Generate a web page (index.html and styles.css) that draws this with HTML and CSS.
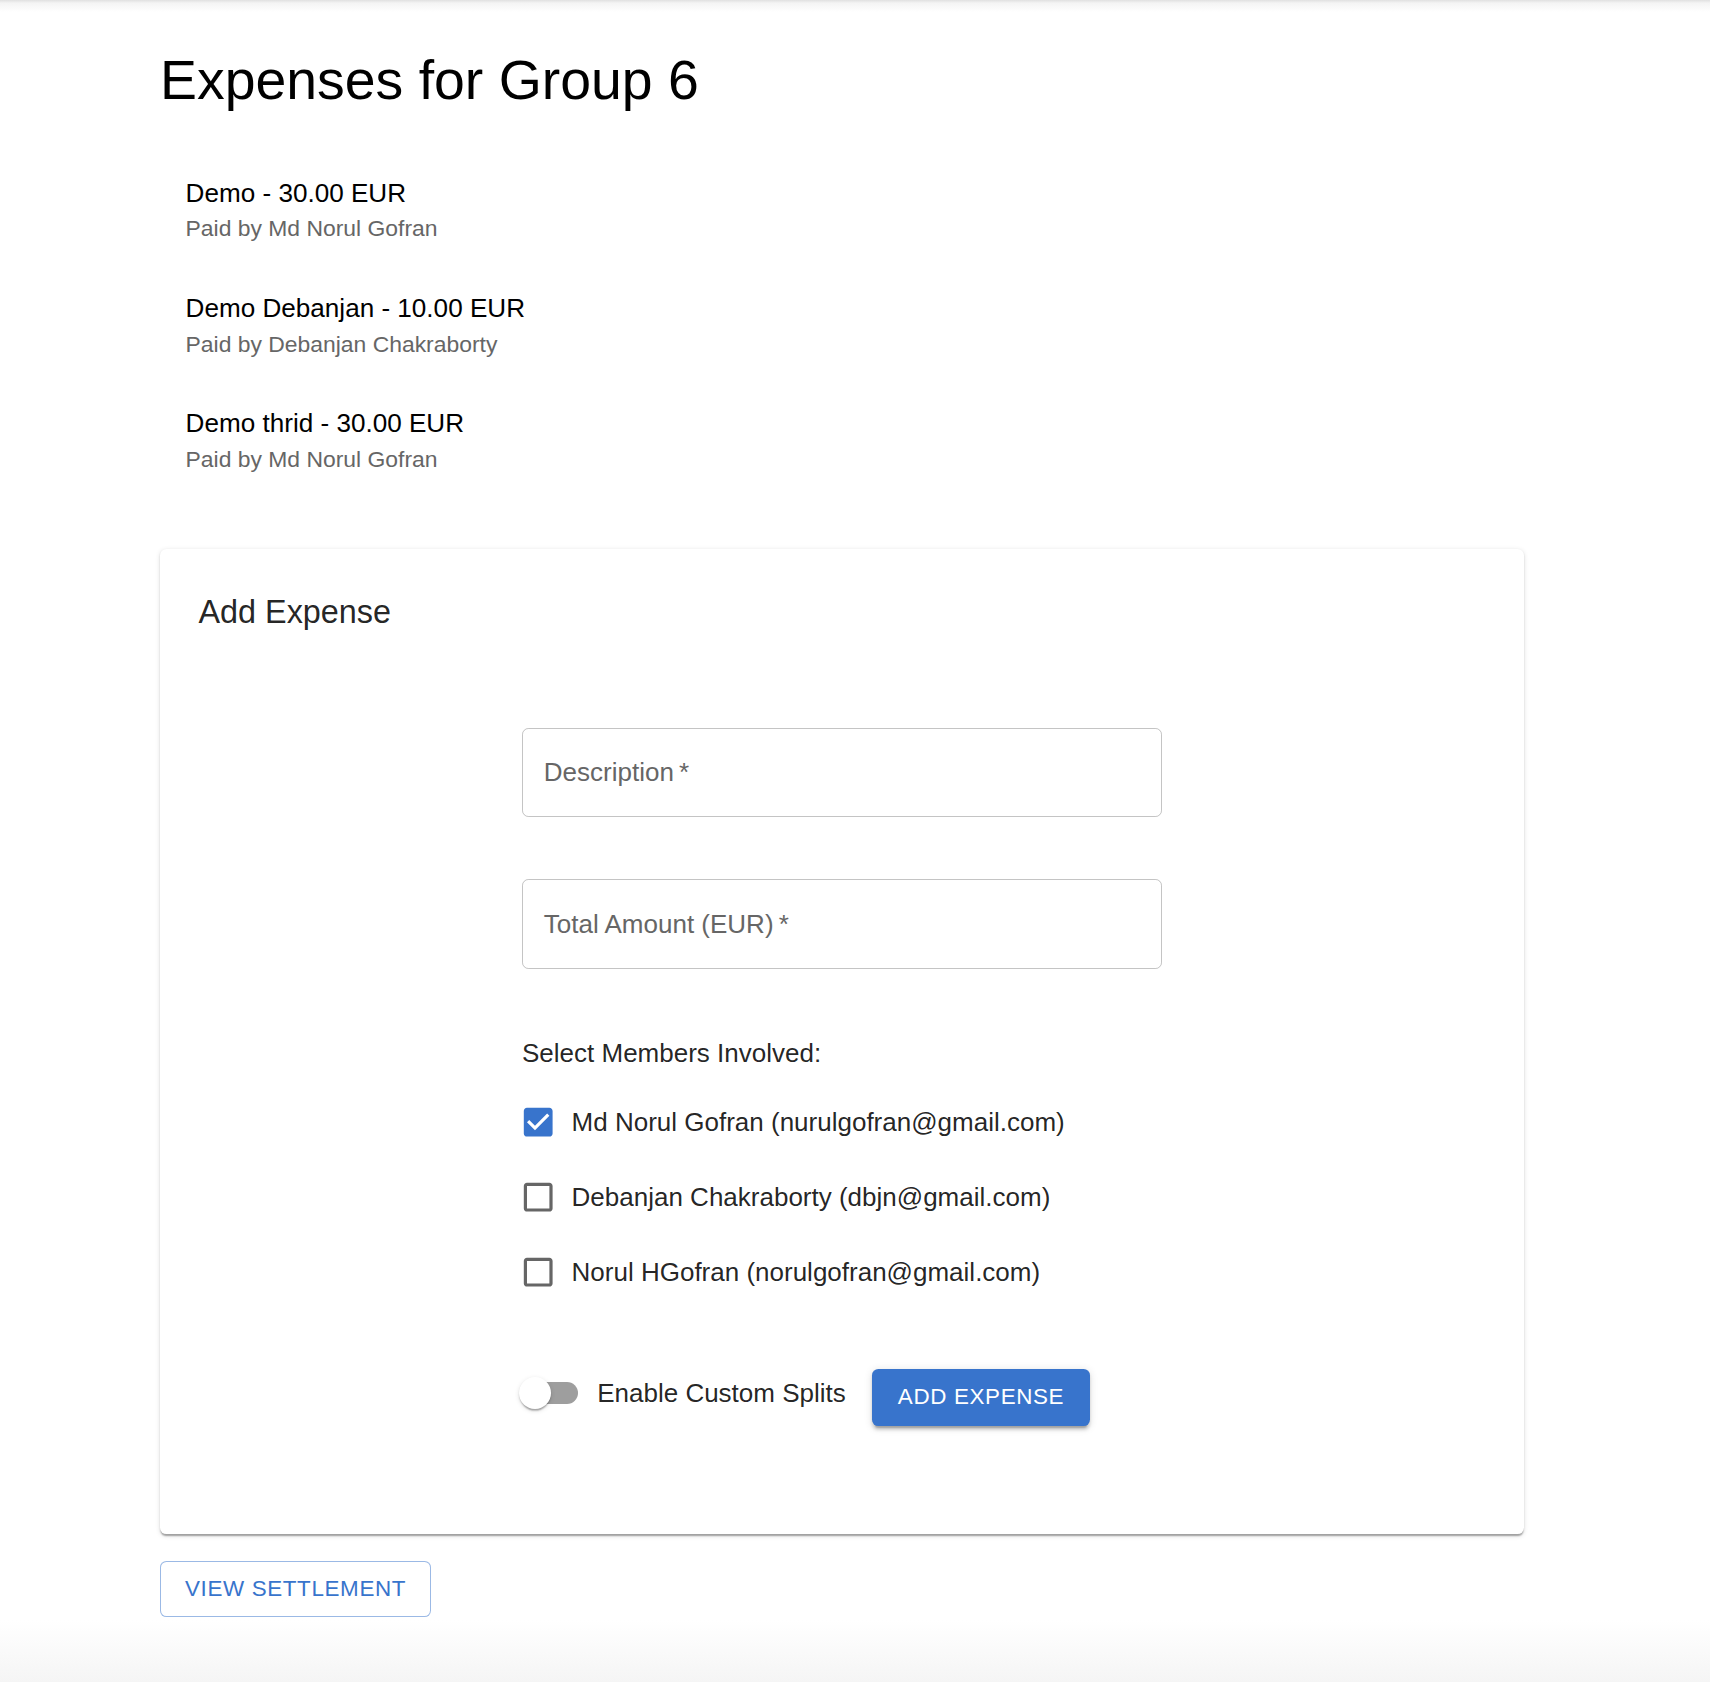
FILE: index.html
```html
<!DOCTYPE html>
<html lang="en">
<head>
<meta charset="utf-8">
<title>Expenses for Group 6</title>
<link rel="stylesheet" href="styles.css">
</head>
<body>
<div class="page">
  <h1 class="title">Expenses for Group 6</h1>

  <ul class="expense-list">
    <li class="expense-item">
      <div class="item-text">
        <div class="item-primary">Demo - 30.00 EUR</div>
        <div class="item-secondary">Paid by Md Norul Gofran</div>
      </div>
    </li>
    <li class="expense-item">
      <div class="item-text">
        <div class="item-primary">Demo Debanjan - 10.00 EUR</div>
        <div class="item-secondary">Paid by Debanjan Chakraborty</div>
      </div>
    </li>
    <li class="expense-item">
      <div class="item-text">
        <div class="item-primary">Demo thrid - 30.00 EUR</div>
        <div class="item-secondary">Paid by Md Norul Gofran</div>
      </div>
    </li>
  </ul>

  <section class="card">
    <h2 class="card-title">Add Expense</h2>
    <form class="expense-form">
      <div class="field"><span class="field-label">Description&thinsp;*</span></div>
      <div class="field field-second"><span class="field-label">Total Amount (EUR)&thinsp;*</span></div>

      <div class="members-label">Select Members Involved:</div>
      <div class="member-list">
        <label class="member-row">
          <span class="checkbox">
            <svg class="checkbox-icon checked" viewBox="0 0 24 24"><path d="M19 3H5c-1.11 0-2 .9-2 2v14c0 1.1.89 2 2 2h14c1.11 0 2-.9 2-2V5c0-1.1-.89-2-2-2zm-9 14l-5-5 1.41-1.41L10 14.17l7.59-7.59L19 8l-9 9z"/></svg>
          </span>
          <span class="member-text">Md Norul Gofran (nurulgofran@gmail.com)</span>
        </label>
        <label class="member-row">
          <span class="checkbox">
            <svg class="checkbox-icon" viewBox="0 0 24 24"><path d="M19 5v14H5V5h14m0-2H5c-1.1 0-2 .9-2 2v14c0 1.1.9 2 2 2h14c1.1 0 2-.9 2-2V5c0-1.1-.9-2-2-2z"/></svg>
          </span>
          <span class="member-text">Debanjan Chakraborty (dbjn@gmail.com)</span>
        </label>
        <label class="member-row">
          <span class="checkbox">
            <svg class="checkbox-icon" viewBox="0 0 24 24"><path d="M19 5v14H5V5h14m0-2H5c-1.1 0-2 .9-2 2v14c0 1.1.9 2 2 2h14c1.1 0 2-.9 2-2V5c0-1.1-.9-2-2-2z"/></svg>
          </span>
          <span class="member-text">Norul HGofran (norulgofran@gmail.com)</span>
        </label>
      </div>

      <div class="actions-row">
        <label class="switch-label">
          <span class="switch">
            <span class="switch-track"></span>
            <span class="switch-thumb"></span>
          </span>
          <span class="switch-text">Enable Custom Splits</span>
        </label>
        <button type="button" class="btn-primary">Add Expense</button>
      </div>
    </form>
  </section>

  <button type="button" class="btn-outlined">View Settlement</button>
</div>
</body>
</html>
```

FILE: styles.css
```css
* {
  box-sizing: border-box;
}

html, body {
  margin: 0;
  padding: 0;
}

body {
  min-height: 1682px;
  font-family: "Liberation Sans", Arial, Helvetica, sans-serif;
  color: rgba(0, 0, 0, 0.87);
  background:
    linear-gradient(to bottom, #e0e0e0 0, #f4f4f4 3px, #ffffff 12px) top / 100% 12px no-repeat,
    linear-gradient(to bottom, #ffffff 0, #f5f5f5 100%) bottom / 100% 62px no-repeat,
    #ffffff;
  overflow: hidden;
}

.page {
  width: 1364px;
  margin-left: 160px;
  padding-top: 46.7px;
}

.title {
  margin: 0;
  font-size: 55.4px;
  line-height: 67px;
  font-weight: 400;
  color: #000;
}

.expense-list {
  list-style: none;
  margin: 0;
  padding: 37.9px 0 12.8px;
}

.expense-item {
  padding: 12.8px 25.6px;
}

.item-text {
  margin: 9.6px 0;
}

.item-primary {
  font-size: 26.1px;
  line-height: 38.4px;
  color: #000;
}

.item-secondary {
  font-size: 22.9px;
  line-height: 32px;
  color: #666666;
}

.card {
  margin-top: 38.6px;
  padding: 38.4px;
  background: #fff;
  border-radius: 6.4px;
  box-shadow:
    0 3.2px 1.6px -1.6px rgba(0, 0, 0, 0.2),
    0 1.6px 1.6px 0 rgba(0, 0, 0, 0.14),
    0 1.6px 4.8px 0 rgba(0, 0, 0, 0.12);
}

.card-title {
  margin: 0;
  font-size: 32.4px;
  line-height: 51.2px;
  font-weight: 400;
  color: rgba(0, 0, 0, 0.87);
}

.expense-form {
  width: 640px;
  margin: 89.5px auto 0;
  padding-bottom: 70.2px;
}

.field {
  height: 89.6px;
  border: 1.6px solid rgba(0, 0, 0, 0.23);
  border-radius: 6.4px;
  padding: 0 20.8px;
  display: flex;
  align-items: center;
}

.field-second {
  margin-top: 62px;
}

.field-label {
  font-size: 26px;
  line-height: 36px;
  color: #666666;
}

.members-label {
  margin-top: 64.7px;
  font-size: 26px;
  line-height: 38.4px;
  color: rgba(0, 0, 0, 0.87);
}

.member-list {
  margin-top: 16.4px;
  display: flex;
  flex-direction: column;
  gap: 7.8px;
}

.member-row {
  display: flex;
  align-items: center;
  margin-left: -17.6px;
  height: 67.2px;
}

.checkbox {
  padding: 14.4px;
  display: inline-flex;
}

.checkbox-icon {
  width: 38.4px;
  height: 38.4px;
  fill: #666666;
  display: block;
}

.checkbox-icon.checked {
  fill: #3874cc;
}

.member-text {
  font-size: 26px;
  line-height: 38.4px;
  color: rgba(0, 0, 0, 0.87);
}

.actions-row {
  margin-top: 57.3px;
  display: flex;
  align-items: flex-start;
}

.switch-label {
  display: inline-flex;
  align-items: center;
  margin-left: -17.6px;
  margin-right: 26.5px;
}

.switch {
  position: relative;
  width: 92.8px;
  height: 60.8px;
  padding: 19.2px;
  display: inline-block;
  flex-shrink: 0;
}

.switch-track {
  display: block;
  width: 54.4px;
  height: 22.4px;
  border-radius: 11.2px;
  background: #9e9e9e;
}

.switch-thumb {
  position: absolute;
  left: 14.4px;
  top: 14.4px;
  width: 32px;
  height: 32px;
  border-radius: 50%;
  background: #ffffff;
  box-shadow:
    0 3.2px 1.6px -1.6px rgba(0, 0, 0, 0.2),
    0 1.6px 1.6px 0 rgba(0, 0, 0, 0.14),
    0 1.6px 4.8px 0 rgba(0, 0, 0, 0.12);
}

.switch-text {
  font-size: 26px;
  line-height: 38.4px;
  color: rgba(0, 0, 0, 0.87);
}

.btn-primary {
  margin-top: 6.1px;
  height: 56.8px;
  padding: 0 25.6px;
  border: 0;
  border-radius: 6.4px;
  background: #3874cc;
  color: #ffffff;
  font-family: "Liberation Sans", Arial, Helvetica, sans-serif;
  font-size: 22.4px;
  font-weight: 400;
  letter-spacing: 0.64px;
  text-transform: uppercase;
  line-height: 37.6px;
  box-shadow:
    0 4.8px 1.6px -3.2px rgba(0, 0, 0, 0.2),
    0 3.2px 3.2px 0 rgba(0, 0, 0, 0.14),
    0 1.6px 8px 0 rgba(0, 0, 0, 0.12);
  cursor: pointer;
}

.btn-outlined {
  display: block;
  margin-top: 26.3px;
  height: 56.8px;
  padding: 0 24px;
  border: 1.6px solid rgba(56, 116, 204, 0.5);
  border-radius: 6.4px;
  background: #ffffff;
  color: #3874cc;
  font-family: "Liberation Sans", Arial, Helvetica, sans-serif;
  font-size: 22.4px;
  font-weight: 400;
  letter-spacing: 0.64px;
  text-transform: uppercase;
  line-height: 37.6px;
  cursor: pointer;
}
```
